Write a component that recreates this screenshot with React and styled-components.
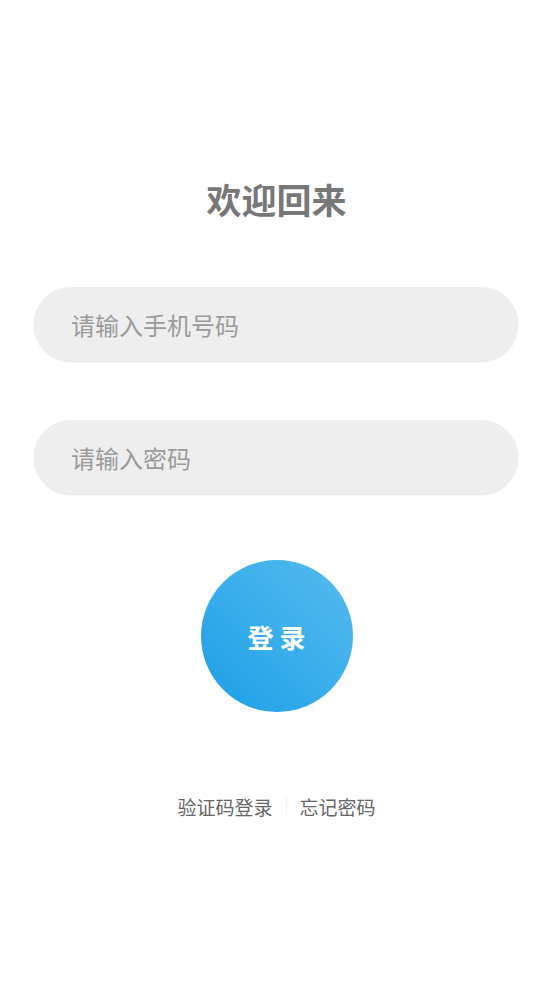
import React from 'react';
import styled, { createGlobalStyle } from 'styled-components';

const GlobalStyle = createGlobalStyle`
    html, body {
        margin: 0;
        padding: 0;
        background: #fff;
    }
    body {
        font-family: "Noto Sans CJK SC", "Noto Sans", sans-serif;
    }
`;

const Page = styled.div`
    width: 553px;
    height: 984px;
    display: flex;
    flex-direction: column;
    align-items: center;
    padding-top: 179px;
    box-sizing: border-box;
    background: #fff;
`;

const Title = styled.div`
    font-size: 35px;
    line-height: 40px;
    font-weight: 700;
    color: #777;
    margin-bottom: 68px;
`;

const Field = styled.input`
    width: 484px;
    height: 74px;
    box-sizing: border-box;
    margin-left: -1px;
    border: none;
    outline: none;
    border-radius: 37px;
    background: #eeeeee;
    box-shadow: 0 1px 2px rgba(0, 0, 0, 0.12);
    padding: 0 37px;
    font-family: inherit;
    font-size: 24px;
    color: #555;
    margin-bottom: ${props => props.$gap}px;

    &::placeholder {
        color: #9a9a9a;
    }
`;

const LoginButton = styled.button`
    width: 152px;
    height: 152px;
    border-radius: 50%;
    border: none;
    padding: 0 0 0 6px;
    background: linear-gradient(45deg, #1b9de6 0%, #3aaeeb 50%, #55baee 100%);
    color: #fff;
    font-family: inherit;
    font-size: 26px;
    font-weight: 700;
    letter-spacing: 6px;
    margin-bottom: 83px;
    cursor: pointer;
`;

const Links = styled.div`
    display: flex;
    align-items: center;
    font-size: 19px;
    line-height: 24px;
    color: #666;
`;

const LinkText = styled.span`
    cursor: pointer;
`;

const Divider = styled.span`
    width: 1px;
    height: 20px;
    background: #f0f0f0;
    margin: 0 13px;
`;

class App extends React.Component {
    render() {
        return (
            <>
                <GlobalStyle />
                <Page>
                    <Title>欢迎回来</Title>
                    <Field $gap={59} type="tel" placeholder="请输入手机号码" />
                    <Field $gap={66} type="password" placeholder="请输入密码" />
                    <LoginButton>登录</LoginButton>
                    <Links>
                        <LinkText>验证码登录</LinkText>
                        <Divider />
                        <LinkText>忘记密码</LinkText>
                    </Links>
                </Page>
            </>
        );
    }
}

export default App;
